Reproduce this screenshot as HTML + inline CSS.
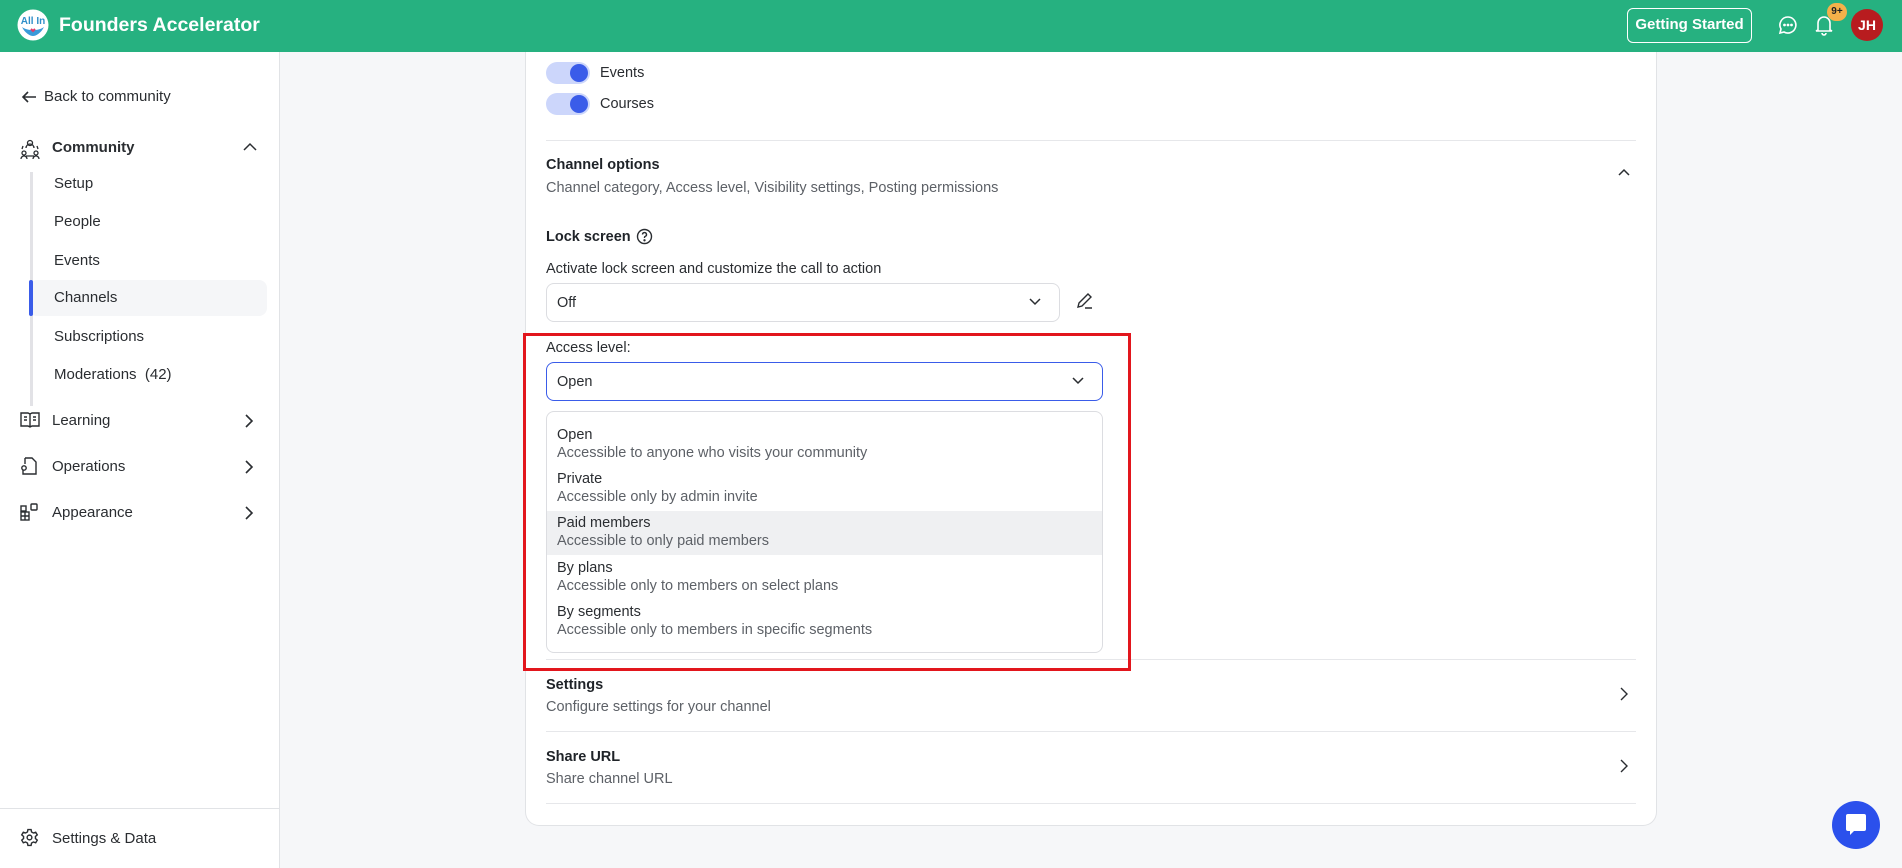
<!DOCTYPE html>
<html><head><meta charset="utf-8"><style>
*{box-sizing:border-box;margin:0;padding:0}
body{width:1902px;height:868px;overflow:hidden;font-family:"Liberation Sans",sans-serif;background:#f6f7f9;position:relative;color:#1f2328}
.a{position:absolute;white-space:nowrap}
.hdr{position:absolute;left:0;top:0;width:1902px;height:52px;background:#26b180;z-index:5}
.hz{z-index:6}
.side{position:absolute;left:0;top:52px;width:280px;height:816px;background:#fff;border-right:1px solid #e1e3e6}
.si{font-size:15px;color:#2a2d31}
.card{position:absolute;left:525px;top:52px;width:1132px;height:774px;background:#fff;border:1px solid #e1e3e6;border-top:none;border-radius:0 0 14px 14px}
.hr{position:absolute;left:546px;width:1090px;height:1px;background:#e6e7ea}
.t{font-size:14.5px;color:#2a2d31}
.b{font-weight:bold;font-size:14.5px;color:#1f2328}
.g{font-size:14.5px;color:#5d6167}
.tog{position:absolute;left:546px;width:44px;height:22px;border-radius:11px;background:#ccd6fb}
.tog i{position:absolute;right:2px;top:2px;width:18px;height:18px;border-radius:50%;background:#3a5ce9}
</style></head><body>
<div class="hdr"></div>
<svg class="a hz" style="left:17px;top:9px" width="32" height="32" viewBox="0 0 32 32"><circle cx="16" cy="16" r="15.5" fill="#fff"/><path d="M5 18c3 6 8 9 11 9s8-3 11-9c-3 2-6 3-11 3S8 20 5 18z" fill="#3a9ad9"/><text x="16" y="15" font-size="10" font-weight="bold" fill="#2f8fc9" text-anchor="middle" font-family="Liberation Sans">All In</text><path d="M14 20l2 2 2-2" stroke="#e03a6a" stroke-width="2" fill="none"/></svg>
<div class="a hz" style="left:59px;top:14px;font-size:19.5px;font-weight:bold;color:#fff">Founders Accelerator</div>
<div class="a hz" style="left:1627px;top:8px;width:125px;height:35px;border:1.5px solid #fff;border-radius:6px;color:#fff;font-weight:bold;font-size:15px;text-align:center;line-height:32px">Getting Started</div>
<svg class="a hz" style="left:1778px;top:15px" width="20" height="20" viewBox="0 0 20 20" fill="none" stroke="#fff" stroke-width="1.6"><path d="M10 2a8 8 0 1 1-4 15l-4 1 1-4A8 8 0 0 1 10 2z"/><circle cx="6.5" cy="10" r=".6" fill="#fff"/><circle cx="10" cy="10" r=".6" fill="#fff"/><circle cx="13.5" cy="10" r=".6" fill="#fff"/></svg>
<svg class="a hz" style="left:1814px;top:14px" width="20" height="22" viewBox="0 0 20 22" fill="none" stroke="#fff" stroke-width="1.6"><path d="M4 16V9a6 6 0 0 1 12 0v7l2 1H2z"/><path d="M8 19a2 2 0 0 0 4 0"/></svg>
<div class="a hz" style="left:1827px;top:3px;width:20px;height:18px;border-radius:9px;background:#f5b14a;color:#222;font-size:10px;font-weight:bold;text-align:center;line-height:18px">9+</div>
<div class="a hz" style="left:1851px;top:9px;width:32px;height:32px;border-radius:50%;background:#b81c1f;color:#fff;font-weight:bold;font-size:14px;text-align:center;line-height:32px">JH</div>

<div class="side"></div>
<svg class="a" style="left:20px;top:88px" width="18" height="18" viewBox="0 0 18 18" fill="none" stroke="#2a2d31" stroke-width="1.6"><path d="M16 9H3M8 4L3 9l5 5"/></svg>
<div class="a si" style="left:44px;top:88px">Back to community</div>
<svg class="a" style="left:19px;top:138px" width="22" height="22" viewBox="0 0 22 22" fill="none" stroke="#2a2d31" stroke-width="1.3"><circle cx="11" cy="5" r="2.5"/><path d="M7 10a4 4 0 0 1 8 0"/><circle cx="5" cy="15" r="2"/><circle cx="17" cy="15" r="2"/><path d="M2 21a3 3 0 0 1 6 0M14 21a3 3 0 0 1 6 0M7 18h8M4 8l-1 3M18 8l1 3"/></svg>
<div class="a si" style="left:52px;top:139px;font-weight:bold">Community</div>
<svg class="a" style="left:242px;top:141px" width="16" height="12" viewBox="0 0 16 12" fill="none" stroke="#2a2d31" stroke-width="1.5"><path d="M2 9l6-6 6 6"/></svg>
<div class="a" style="left:30px;top:172px;width:3px;height:234px;background:#e2e2e6"></div>
<div class="a" style="left:29px;top:280px;width:238px;height:36px;background:#f5f6f8;border-radius:8px"></div>
<div class="a" style="left:29px;top:280px;width:4px;height:36px;background:#3a5ce9;border-radius:2px"></div>
<div class="a si" style="left:54px;top:175px">Setup</div>
<div class="a si" style="left:54px;top:213px">People</div>
<div class="a si" style="left:54px;top:252px">Events</div>
<div class="a si" style="left:54px;top:289px">Channels</div>
<div class="a si" style="left:54px;top:328px">Subscriptions</div>
<div class="a si" style="left:54px;top:366px">Moderations &nbsp;(42)</div>
<svg class="a" style="left:20px;top:411px" width="20" height="18" viewBox="0 0 20 18" fill="none" stroke="#2a2d31" stroke-width="1.4"><path d="M1 2h7l2 1 2-1h7v13h-7l-2 1-2-1H1zM10 3v13M4 6h3M4 9h3M13 6h3M13 9h3"/></svg>
<div class="a si" style="left:52px;top:412px">Learning</div>
<svg class="a" style="left:243px;top:413px" width="12" height="16" viewBox="0 0 12 16" fill="none" stroke="#2a2d31" stroke-width="1.6"><path d="M3 2l6 6-6 6"/></svg>
<svg class="a" style="left:20px;top:456px" width="18" height="20" viewBox="0 0 18 20" fill="none" stroke="#2a2d31" stroke-width="1.4"><path d="M5 2h7l4 4v12H3v-4M5 2v6"/><circle cx="4" cy="12" r="2.2"/></svg>
<div class="a si" style="left:52px;top:458px">Operations</div>
<svg class="a" style="left:243px;top:459px" width="12" height="16" viewBox="0 0 12 16" fill="none" stroke="#2a2d31" stroke-width="1.6"><path d="M3 2l6 6-6 6"/></svg>
<svg class="a" style="left:20px;top:503px" width="18" height="18" viewBox="0 0 18 18" fill="none" stroke="#2a2d31" stroke-width="1.4"><rect x="1" y="9" width="8" height="8"/><path d="M1 13h8M5 9v8"/><rect x="11" y="1" width="6" height="6" rx="1"/><rect x="1" y="3" width="5" height="5"/></svg>
<div class="a si" style="left:52px;top:504px">Appearance</div>
<svg class="a" style="left:243px;top:505px" width="12" height="16" viewBox="0 0 12 16" fill="none" stroke="#2a2d31" stroke-width="1.6"><path d="M3 2l6 6-6 6"/></svg>
<div class="a" style="left:0;top:808px;width:279px;height:1px;background:#e1e3e6"></div>
<svg class="a" style="left:20px;top:828px" width="19" height="19" viewBox="0 0 24 24" fill="none" stroke="#2a2d31" stroke-width="1.8"><circle cx="12" cy="12" r="3"/><path d="M10 2h4l.6 3 2.3 1.3 2.9-1 2 3.4-2.3 2v2.6l2.3 2-2 3.4-2.9-1-2.3 1.3-.6 3h-4l-.6-3-2.3-1.3-2.9 1-2-3.4 2.3-2v-2.6l-2.3-2 2-3.4 2.9 1L9.4 5z"/></svg>
<div class="a si" style="left:52px;top:830px">Settings &amp; Data</div>

<div class="card"></div>
<div class="tog" style="top:62px"><i></i></div><div class="a t" style="left:600px;top:65px">Events</div>
<div class="tog" style="top:93px"><i></i></div><div class="a t" style="left:600px;top:96px">Courses</div>
<div class="hr" style="top:140px"></div>
<div class="a b" style="left:546px;top:157px">Channel options</div>
<div class="a g" style="left:546px;top:180px">Channel category, Access level, Visibility settings, Posting permissions</div>
<svg class="a" style="left:1617px;top:167px" width="14" height="10" viewBox="0 0 14 10" fill="none" stroke="#2a2d31" stroke-width="1.5"><path d="M2 8l5-5 5 5"/></svg>
<div class="a b" style="left:546px;top:229px">Lock screen</div>
<svg class="a" style="left:636px;top:228px" width="17" height="17" viewBox="0 0 17 17" fill="none" stroke="#2a2d31" stroke-width="1.4"><circle cx="8.5" cy="8.5" r="7"/><path d="M6.5 6.5a2 2 0 1 1 2.7 1.9c-.5.2-.7.6-.7 1.1V10"/><circle cx="8.5" cy="12.3" r=".5" fill="#2a2d31"/></svg>
<div class="a t" style="left:546px;top:261px">Activate lock screen and customize the call to action</div>
<div class="a" style="left:546px;top:283px;width:514px;height:39px;border:1px solid #dcdde1;border-radius:8px"></div>
<div class="a t" style="left:557px;top:295px">Off</div>
<svg class="a" style="left:1028px;top:297px" width="14" height="10" viewBox="0 0 14 10" fill="none" stroke="#2a2d31" stroke-width="1.5"><path d="M2 2l5 5 5-5"/></svg>
<svg class="a" style="left:1076px;top:292px" width="18" height="18" viewBox="0 0 18 18" fill="none" stroke="#2a2d31" stroke-width="1.4"><path d="M2 15l1-4 9-9 3 3-9 9zM9 16h7"/></svg>
<div class="a t" style="left:546px;top:340px">Access level:</div>
<div class="a" style="left:546px;top:362px;width:557px;height:39px;border:1.3px solid #3a5ce9;border-radius:8px"></div>
<div class="a t" style="left:557px;top:374px">Open</div>
<svg class="a" style="left:1071px;top:376px" width="14" height="10" viewBox="0 0 14 10" fill="none" stroke="#2a2d31" stroke-width="1.5"><path d="M2 2l5 5 5-5"/></svg>
<div class="a" style="left:546px;top:411px;width:557px;height:242px;border:1px solid #dcdde1;border-radius:8px;overflow:hidden"><div style="position:absolute;left:0;top:99px;width:100%;height:44px;background:#eff0f2"></div></div>
<div class="a t" style="left:557px;top:427px">Open</div><div class="a g" style="left:557px;top:445px">Accessible to anyone who visits your community</div>
<div class="a t" style="left:557px;top:471px">Private</div><div class="a g" style="left:557px;top:489px">Accessible only by admin invite</div>
<div class="a t" style="left:557px;top:515px">Paid members</div><div class="a g" style="left:557px;top:533px">Accessible to only paid members</div>
<div class="a t" style="left:557px;top:560px">By plans</div><div class="a g" style="left:557px;top:578px">Accessible only to members on select plans</div>
<div class="a t" style="left:557px;top:604px">By segments</div><div class="a g" style="left:557px;top:622px">Accessible only to members in specific segments</div>
<div class="hr" style="top:659px"></div>
<div class="a" style="left:523px;top:333px;width:608px;height:338px;border:3px solid #e2161d"></div>
<div class="a b" style="left:546px;top:677px">Settings</div>
<div class="a g" style="left:546px;top:699px">Configure settings for your channel</div>
<svg class="a" style="left:1619px;top:686px" width="10" height="16" viewBox="0 0 10 16" fill="none" stroke="#2a2d31" stroke-width="1.4"><path d="M2 2l6 6-6 6"/></svg>
<div class="hr" style="top:731px"></div>
<div class="a b" style="left:546px;top:749px">Share URL</div>
<div class="a g" style="left:546px;top:771px">Share channel URL</div>
<svg class="a" style="left:1619px;top:758px" width="10" height="16" viewBox="0 0 10 16" fill="none" stroke="#2a2d31" stroke-width="1.4"><path d="M2 2l6 6-6 6"/></svg>
<div class="hr" style="top:803px"></div>
<div class="a" style="left:1832px;top:801px;width:48px;height:48px;border-radius:50%;background:#2b50ec"></div>
<svg class="a" style="left:1845px;top:813px" width="22" height="24" viewBox="0 0 22 24"><path d="M3 1h16a2 2 0 0 1 2 2v13a2 2 0 0 1-2 2H9l-4 4v-4H3a2 2 0 0 1-2-2V3a2 2 0 0 1 2-2z" fill="#fff"/></svg>
</body></html>
